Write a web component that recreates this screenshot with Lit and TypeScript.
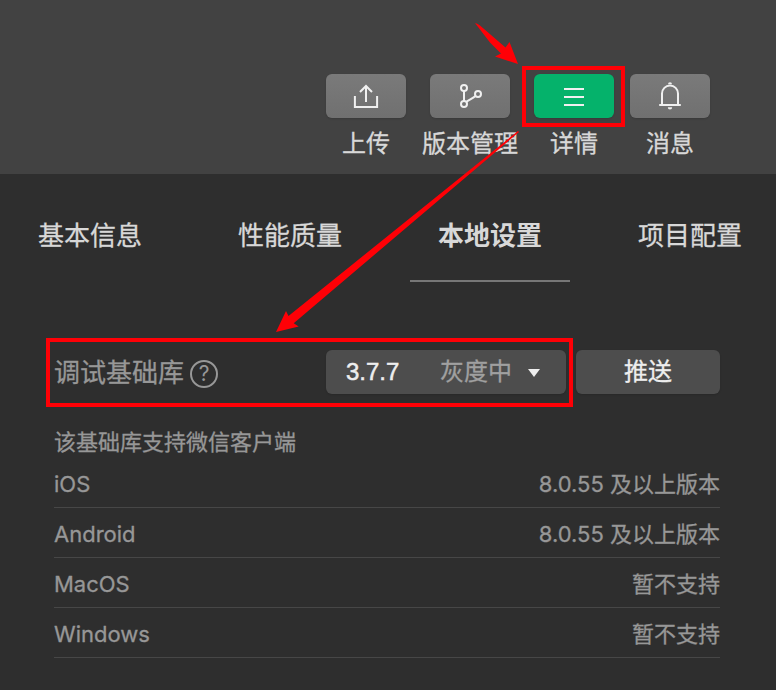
import { LitElement, html, css, svg } from "lit";
import { customElement } from "lit/decorators.js";

const icons: Record<string, unknown> = {
  upload: svg`<path d="M14.9 18V29H37.1V18M26 24V8.6M20 14L26 8L32 14"/>`,
  branch: svg`<circle cx="20" cy="10" r="3"/><circle cx="20" cy="26" r="3"/><circle cx="34" cy="16" r="3"/><path d="M20 13V23M22.2 24C25.5 21.8 28.8 20.3 31.5 18"/>`,
  list: svg`<path d="M16 11H36M16 19H36M16 27H36"/>`,
  bell: svg`<path d="M18 26.8V15.5A8 8 0 0 1 34 15.5V26.8M15.2 27H36.8"/><path class="f" d="M24 6.2a2 2 0 0 1 4 0zM23.8 29.2h4.4a2.2 2.4 0 0 1-4.4 0z"/>`,
};

const tools = [
  { icon: "upload", label: "上传" },
  { icon: "branch", label: "版本管理" },
  { icon: "list", label: "详情", active: true },
  { icon: "bell", label: "消息" },
];
const tabs = ["基本信息", "性能质量", "本地设置", "项目配置"];
const support = [
  ["iOS", "8.0.55 及以上版本"],
  ["Android", "8.0.55 及以上版本"],
  ["MacOS", "暂不支持"],
  ["Windows", "暂不支持"],
];

@customElement("app-root")
export class AppRoot extends LitElement {
  static styles = css`
    * { box-sizing: border-box; }
    :host {
      display: block; position: relative; width: 776px; height: 690px; overflow: hidden;
      background: #2e2e2e; color: #d8d8d8;
      font-family: Inter, "Noto Sans CJK SC", sans-serif;
      -webkit-text-stroke: 0.3px currentColor;
    }
    header {
      height: 174px; background: #424242; padding: 74px 58px 0 0;
      display: flex; justify-content: flex-end;
    }
    .tool { width: 96px; display: flex; flex-direction: column; align-items: center; white-space: nowrap; }
    .tool + .tool { margin-left: 8px; }
    .tool:last-child { margin-left: 0; }
    .btn {
      width: 80px; height: 44px; border-radius: 6px; display: grid; place-items: center;
      background: linear-gradient(#7a7a7a, #707070); box-shadow: 0 1px 2px #0002;
    }
    .btn.active { background: #05b26b; }
    .btn svg { width: 52px; height: 36px; fill: none; stroke: #f0f0f0; stroke-width: 2; }
    .btn .f { fill: #f0f0f0; stroke: none; }
    .label { font-size: 24px; line-height: 36px; margin-top: 8px; }
    nav { display: grid; grid-template-columns: repeat(4, 200px); margin-left: -10px; height: 108px; }
    .tab { width: 160px; justify-self: center; text-align: center; font-size: 26px; line-height: 40px; padding-top: 42px; }
    .tab.active { font-weight: 700; border-bottom: 2px solid #777; -webkit-text-stroke: 0; }
    .library { display: flex; align-items: center; height: 44px; margin: 68px 56px 0 54px; }
    .name { font-size: 26px; line-height: 40px; color: #979797; display: flex; align-items: center; gap: 6px; width: 272px; height: 48px; padding-top: 2px; }
    .help { width: 28px; height: 28px; margin-top: 1px; border: 2px solid #979797; border-radius: 50%; font-size: 21px; line-height: 24px; text-align: center; -webkit-text-stroke: 0; }
    .select, .push { height: 44px; border-radius: 6px; background: #4d4d4d; font-size: 24px; line-height: 36px; color: #eee; display: flex; align-items: center; box-shadow: 0 1px 2px #0002; padding-bottom: 1px; }
    .select { width: 240px; padding-left: 20px; }
    .version { width: 94px; font-family: "Liberation Sans", sans-serif; padding-top: 1px; -webkit-text-stroke: 0.5px currentColor; }
    .stage { color: #a0a0a0; }
    .caret { margin: 3px 0 0 16px; border: 6px solid transparent; border-top: 8.5px solid #eee; border-bottom: 0; }
    .push { width: 144px; margin-left: 10px; justify-content: center; }
    .support { margin: 23px 56px 0 54px; font-size: 22px; color: #979797; }
    .caption { height: 41px; line-height: 50px; }
    .row { height: 50px; line-height: 52px; display: flex; justify-content: space-between; border-bottom: 1px solid #474747; }
    .marks { position: absolute; inset: 0; width: 776px; height: 690px; }
    .marks rect { fill: none; stroke: #ff0006; stroke-width: 4; }
    .marks path { fill: #ff0006; }
  `;

  render() {
    return html`
      <header>
        ${tools.map((t) => html`<div class="tool">
          <div class="btn ${t.active ? "active" : ""}"><svg viewBox="0 0 52 36">${icons[t.icon]}</svg></div>
          <div class="label">${t.label}</div>
        </div>`)}
      </header>
      <nav>${tabs.map((t, i) => html`<div class="tab ${i === 2 ? "active" : ""}">${t}</div>`)}</nav>
      <div class="library">
        <div class="name">调试基础库<span class="help">?</span></div>
        <div class="select"><span class="version">3.7.7</span><span class="stage">灰度中</span><span class="caret"></span></div>
        <div class="push">推送</div>
      </div>
      <section class="support">
        <div class="caption">该基础库支持微信客户端</div>
        ${support.map(([os, v]) => html`<div class="row"><span>${os}</span><span>${v}</span></div>`)}
      </section>
      <svg class="marks" viewBox="0 0 776 690">
        <rect x="524" y="68" width="99" height="57"/>
        <rect x="48" y="340" width="523" height="65"/>
        <path d="M475 23Q477 23 480 25.500L505.500 47.500L509.500 42L518 64L495 56.500L501 53.500L490 42.500Z"/>
        <path d="M518 131L519 132L293.700 323.300L298.700 326.500L276 332L286 311L288.500 316Z"/>
      </svg>
    `;
  }
}
